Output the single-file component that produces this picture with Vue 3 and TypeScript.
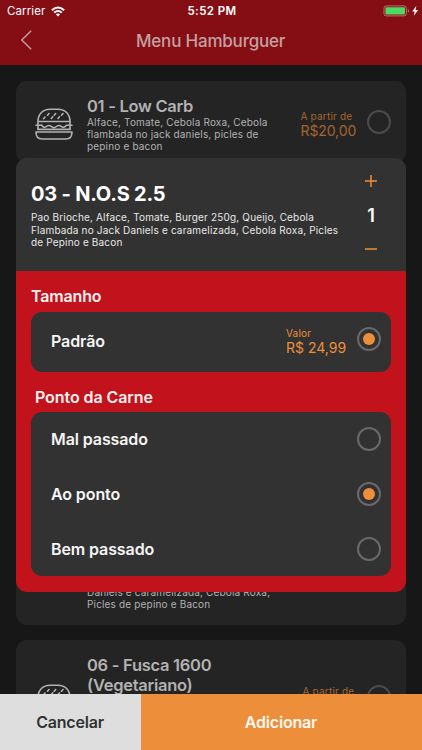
<script setup lang="ts">
import { ref } from 'vue'

interface MenuItem {
  id: string
  title: string[]
  description: string[]
  price?: string
}

const items: MenuItem[] = [
  {
    id: 'low-carb',
    title: ['01 - Low Carb'],
    description: ['Alface, Tomate, Cebola Roxa, Cebola', 'flambada no jack daniels, picles de', 'pepino e bacon'],
    price: 'R$20,00',
  },
  {
    id: 'covered',
    title: [],
    description: ['Daniels e caramelizada, Cebola Roxa,', 'Picles de pepino e Bacon'],
  },
  {
    id: 'fusca',
    title: ['06 - Fusca 1600', '(Vegetariano)'],
    description: [],
    price: '',
  },
]

const doneness = ['Mal passado', 'Ao ponto', 'Bem passado']
const selected = ref('Ao ponto')
const quantity = ref(1)
</script>

<template>
  <div class="screen">
    <header class="header">
      <div class="status">
        <div class="carrier">
          <span class="carrier-name">Carrier</span>
          <svg class="wifi" viewBox="0 0 14 11" width="14" height="11">
            <path d="M0.2 3.5Q7-2.6 13.8 3.5L12.4 5Q7 .2 1.6 5Z" />
            <path d="M2.5 5.9Q7 2.1 11.5 5.9L10.1 7.3Q7 4.8 3.9 7.3Z" />
            <path d="M4.8 8.2Q7 6.6 9.2 8.2L7 10.5Z" />
          </svg>
        </div>
        <span class="clock">5:52 PM</span>
        <svg class="battery" viewBox="0 0 38 12" width="38" height="12">
          <rect x="1" y=".9" width="22.4" height="10" rx="2.4" fill="none" stroke="#b97566" />
          <rect x="2.4" y="2.3" width="19.6" height="7.2" rx="1.1" fill="#4cd964" />
          <path d="M24.9 4.2Q26.2 5 26.2 5.9T24.9 7.6Z" fill="#b97566" />
          <path d="M33.4.8L29.2 6.5H31.7L30.8 10.7L35.2 4.9H32.5Z" fill="#fff" />
        </svg>
      </div>
      <div class="nav">
        <svg class="back" viewBox="0 0 12 20" width="12" height="20">
          <path d="M10.2.8L.8 10L10.2 19.2" fill="none" stroke="#c4a0a0" stroke-width="1.4" />
        </svg>
        <h1>Menu Hamburguer</h1>
      </div>
    </header>

    <main class="list">
      <article v-for="item in items" :key="item.id" class="card" :class="item.id">
        <svg v-if="item.title.length" class="burger" viewBox="0 0 38 32" width="38" height="32">
          <g fill="none" stroke="#b2b2b2" stroke-width="1.6" stroke-linecap="round" stroke-linejoin="round">
            <path d="M3 13.5C3 6 8 1.2 15 1.2H23C30 1.2 35 6 35 13.5Z" />
            <path d="M3 13.5V21.4M35 13.5V21.4M1 17.2H5.5L6.5 17Q9 20.7 11.5 18.5Q14 16.4 16.5 18.7Q19 20.7 21.5 18.5Q24 16.4 26.5 18.7Q29 20.5 31.5 17.2H37" />
            <path d="M3 21.4H35" />
            <path d="M1 24H37C37 28.5 34.5 31 31 31H7C3.5 31 1 28.5 1 24Z" />
            <path d="M8.5 10.7L10 9M12.5 7.2L14 5.5M16.3 10.5L17.8 8.8M19.2 7.2L20.7 5.5M23 10.5L24.5 8.8M26.5 7.2L28 5.5" />
          </g>
        </svg>
        <div class="card-text">
          <h2 v-if="item.title.length"><span v-for="line in item.title" :key="line">{{ line }}</span></h2>
          <p v-if="item.description.length" class="desc"><span v-for="line in item.description" :key="line">{{ line }}</span></p>
        </div>
        <div v-if="item.price !== undefined" class="price">
          <small>A partir de</small>
          <b>{{ item.price }}</b>
        </div>
        <i v-if="item.price !== undefined" class="radio dim"></i>
      </article>
    </main>

    <section class="modal">
      <div class="product">
        <div class="product-text">
          <h2>03 - N.O.S 2.5</h2>
          <p class="desc">
            <span>Pao Brioche, Alface, Tomate, Burger 250g, Queijo, Cebola</span>
            <span>Flambada no Jack Daniels e caramelizada, Cebola Roxa, Picles</span>
            <span>de Pepino e Bacon</span>
          </p>
        </div>
        <div class="stepper">
          <svg viewBox="0 0 12 12" width="12" height="12" @click="quantity++">
            <path d="M0 6H12M6 0V12" stroke="#ed8f3a" stroke-width="1.5" />
          </svg>
          <span>{{ quantity }}</span>
          <svg viewBox="0 0 12 12" width="12" height="12" @click="quantity = Math.max(1, quantity - 1)">
            <path d="M0 6H12" stroke="#ed8f3a" stroke-width="1.5" />
          </svg>
        </div>
      </div>
      <div class="options">
        <h3 class="size-heading">Tamanho</h3>
        <div class="group size">
          <span class="label padrao">Padrão</span>
          <div class="price bright">
            <small>Valor</small>
            <b>R$ 24,99</b>
          </div>
          <i class="radio on"></i>
        </div>
        <h3 class="meat-heading">Ponto da Carne</h3>
        <div class="group meat">
          <div v-for="option in doneness" :key="option" class="row" @click="selected = option">
            <span class="label">{{ option }}</span>
            <i class="radio" :class="{ on: selected === option }"></i>
          </div>
        </div>
      </div>
    </section>

    <footer class="actions">
      <button class="cancel">Cancelar</button>
      <button class="add">Adicionar</button>
    </footer>
  </div>
</template>

<style>
body {
  margin: 0;
  background: #171717;
}
</style>

<style scoped>
* {
  box-sizing: border-box;
}
.screen {
  position: relative;
  width: 422px;
  height: 750px;
  overflow: hidden;
  display: flex;
  flex-direction: column;
  background: #171717;
  font-family: Inter, "Liberation Sans", sans-serif;
}
h1, h2, h3, p {
  margin: 0;
  white-space: nowrap;
}
h2 span, .desc span {
  display: block;
}
svg {
  display: block;
  flex: none;
}
.header {
  flex: none;
  height: 65px;
  background: #850e14;
}
.status {
  height: 20px;
  padding: 2px 5px 0 7px;
  display: grid;
  grid-template-columns: 1fr auto 1fr;
  align-items: center;
  color: #fff;
  font-size: 11.5px;
}
.carrier {
  display: flex;
  align-items: center;
  gap: 6px;
}
.carrier-name {
  letter-spacing: 0.1px;
}
.wifi {
  fill: #fff;
}
.clock {
  font-weight: 600;
  letter-spacing: 0.4px;
}
.battery {
  justify-self: end;
  margin-right: -4px;
}
.nav {
  height: 45px;
  padding-left: 21px;
  display: grid;
  grid-template-columns: 115px 1fr;
  align-items: center;
}
.back {
  margin-top: -5px;
}
h1 {
  margin-top: -3px;
  color: #c4a0a0;
  font-size: 17px;
  font-weight: 500;
  letter-spacing: -0.2px;
  line-height: 22px;
}
.list {
  flex: 1;
  min-height: 0;
  overflow: hidden;
  padding: 16px 16px 0;
}
.card {
  display: flex;
  background: #242424;
  border-radius: 11px;
  height: 82px;
  padding-left: 19px;
}
.burger {
  margin-top: 27px;
}
.card-text {
  width: 213px;
  padding: 16px 0 0 14px;
  color: #b2b2b2;
}
h2 {
  font-size: 16.5px;
  font-weight: 600;
  letter-spacing: -0.28px;
  line-height: 19.5px;
}
.desc {
  font-size: 10px;
  line-height: 12.3px;
  letter-spacing: 0.17px;
}
.card .desc {
  margin-top: -1px;
}
.price {
  display: flex;
  flex-direction: column;
  width: 67px;
  color: #a6652c;
  white-space: nowrap;
}
.card .price {
  margin-top: 29px;
  margin-left: 14.5px;
  width: 66px;
}
.price small {
  font-size: 10px;
  line-height: 12px;
  letter-spacing: 0.2px;
}
.price b {
  font-size: 14px;
  font-weight: 400;
  line-height: 17px;
}
.card .price b {
  letter-spacing: -0.1px;
}
.radio {
  flex: none;
  display: grid;
  place-items: center;
  width: 24px;
  height: 24px;
  border: 2px solid #69696b;
  border-radius: 50%;
}
.radio.dim {
  border-color: #4b4b4b;
}
.card .radio {
  margin-top: 29px;
}
.radio.on::after {
  content: "";
  width: 12px;
  height: 12px;
  border-radius: 50%;
  background: #ed8f3a;
}
.covered {
  margin-top: 367px;
  height: 95px;
}
.covered .card-text {
  width: auto;
  padding: 57px 0 0 52px;
}
.fusca {
  margin-top: 15px;
  height: 110px;
}
.fusca .burger {
  margin-top: 44px;
}
.fusca .card-text {
  padding-top: 16.4px;
}
.fusca .price {
  margin-top: 45px;
  margin-left: 16.5px;
  width: 64px;
}
.fusca .radio {
  margin-top: 45px;
}
.modal {
  position: absolute;
  left: 16px;
  top: 158px;
  width: 390px;
  height: 434px;
  display: flex;
  flex-direction: column;
}
.product {
  flex: none;
  display: flex;
  justify-content: space-between;
  height: 113px;
  padding: 0 29px 0 15px;
  border-radius: 11px 11px 0 0;
  background: #323232;
}
.product-text {
  padding-top: 24px;
  color: #fff;
}
.product h2 {
  font-size: 20px;
  font-weight: 700;
  letter-spacing: -0.2px;
  line-height: 24px;
}
.product .desc {
  margin-top: 5.3px;
  color: #e8e8e8;
}
.stepper {
  display: flex;
  flex-direction: column;
  align-items: center;
  padding-top: 17px;
  color: #fff;
  font-size: 18px;
  font-weight: 600;
}
.stepper span {
  margin: 18px 0 16px;
  line-height: 22px;
}
.options {
  flex: 1;
  padding: 0 15px;
  border-radius: 0 0 11px 11px;
  background: #c2131c;
}
h3 {
  color: #fff0f0;
  font-size: 16px;
  font-weight: 600;
  letter-spacing: -0.15px;
  line-height: 20px;
}
.size-heading {
  padding-top: 15px;
}
.meat-heading {
  padding: 15px 0 0 4px;
  letter-spacing: -0.08px;
}
.group {
  background: #323232;
  border-radius: 11px;
}
.size {
  display: flex;
  height: 60px;
  margin-top: 6px;
  padding: 0 10px 0 20px;
}
.label {
  flex: 1;
  color: #f5f5f5;
  font-size: 16px;
  font-weight: 600;
  letter-spacing: -0.1px;
  line-height: 20px;
}
.padrao {
  margin-top: 19px;
}
.bright {
  margin-top: 15px;
  width: 71px;
  color: #ed8f3a;
}
.size .radio {
  margin-top: 15px;
}
.meat {
  height: 164px;
  margin-top: 5px;
  padding: 0 10px 0 20px;
}
.row {
  display: flex;
  align-items: center;
  height: 55px;
}
.row .label {
  margin-top: -1px;
}
.row .radio {
  margin-top: -2px;
}
.actions {
  flex: none;
  display: grid;
  grid-template-columns: 141px 1fr;
  height: 56px;
}
button {
  border: 0;
  padding: 0;
  font: 600 16px/20px Inter, "Liberation Sans", sans-serif;
  letter-spacing: -0.2px;
}
.cancel {
  padding-right: 1px;
  background: #dedede;
  color: #323232;
}
.add {
  padding-right: 1px;
  background: #ed8f3a;
  color: #fff8ef;
}
</style>
